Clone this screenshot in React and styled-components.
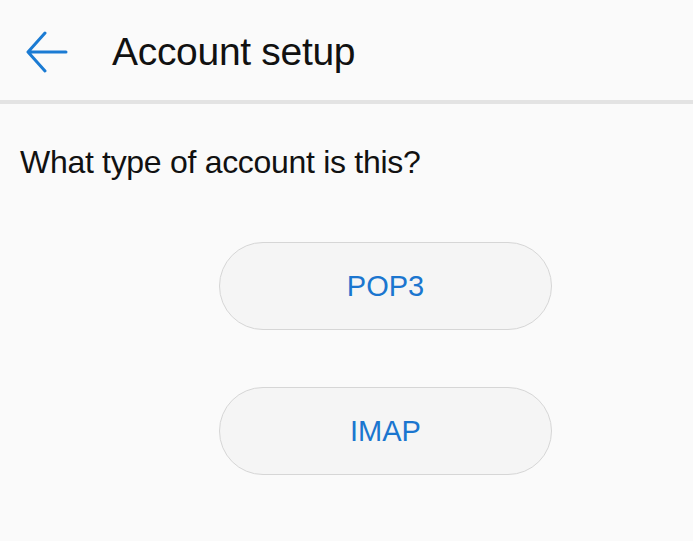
import React from 'react';
import styled, { createGlobalStyle } from 'styled-components';

const GlobalStyle = createGlobalStyle`
  html, body {
    margin: 0;
    padding: 0;
    background: #fafafa;
  }
  body {
    font-family: "Liberation Sans", Arial, sans-serif;
  }
`;

const StyledPage = styled.div`
  width: 693px;
  height: 541px;
  background: #fafafa;
  display: flex;
  flex-direction: column;
  overflow: hidden;
`;

const StyledHeader = styled.header`
  height: 104px;
  box-sizing: border-box;
  display: flex;
  align-items: center;
  padding: 4px 0 0 26px;
  border-bottom: 4px solid #e3e3e3;
`;

const StyledBackButton = styled.button`
  width: 42px;
  height: 42px;
  padding: 0;
  border: none;
  background: none;
  display: flex;
  align-items: center;
  justify-content: center;
  margin-right: 44px;
  cursor: pointer;
`;

const StyledTitle = styled.h1`
  margin: 0;
  font-size: 39px;
  font-weight: 400;
  color: #111111;
  letter-spacing: -0.3px;
`;

const StyledContent = styled.main`
  padding: 40px 20px 0;
  display: flex;
  flex-direction: column;
`;

const StyledQuestion = styled.p`
  margin: 0;
  font-size: 32px;
  color: #111111;
  letter-spacing: -0.3px;
  line-height: 36px;
`;

const StyledOptions = styled.div`
  display: flex;
  flex-direction: column;
  align-items: flex-start;
  gap: 57px;
  margin-top: 62px;
  padding-left: 199px;
`;

const StyledOption = styled.button`
  width: 333px;
  height: 88px;
  border-radius: 44px;
  border: 1px solid #d6d6d6;
  background: #f5f5f5;
  color: #1b76cf;
  font-family: "Liberation Sans", Arial, sans-serif;
  font-size: 29px;
  display: flex;
  align-items: center;
  justify-content: center;
  cursor: pointer;
`;

const BackArrow = () => (
  <svg width="42" height="42" viewBox="0 0 42 42" fill="none">
    <path
      d="M40 21H3M19 2L2 21l17 19"
      stroke="#1b7bd3"
      strokeWidth="3"
      strokeLinecap="round"
      strokeLinejoin="round"
    />
  </svg>
);

const options = ['POP3', 'IMAP'];

const App = () => (
  <>
    <GlobalStyle />
    <StyledPage>
      <StyledHeader>
        <StyledBackButton aria-label="Back">
          <BackArrow />
        </StyledBackButton>
        <StyledTitle>Account setup</StyledTitle>
      </StyledHeader>
      <StyledContent>
        <StyledQuestion>What type of account is this?</StyledQuestion>
        <StyledOptions>
          {options.map(option => (
            <StyledOption key={option}>{option}</StyledOption>
          ))}
        </StyledOptions>
      </StyledContent>
    </StyledPage>
  </>
);

export default App;
